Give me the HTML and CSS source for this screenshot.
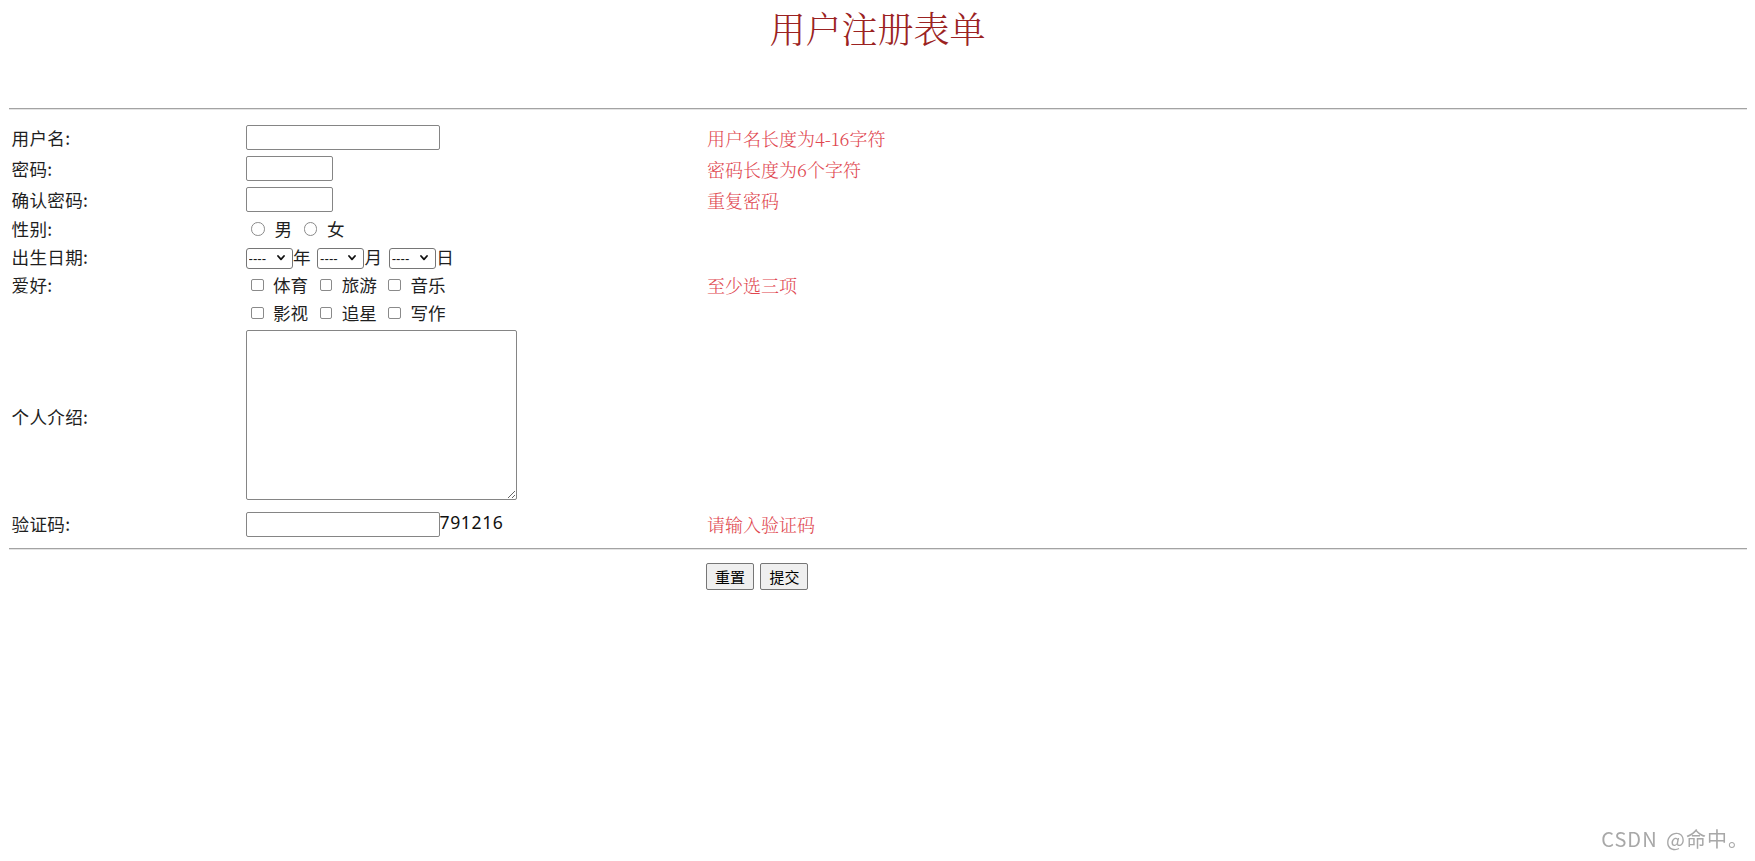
FILE: index.html
```html
<!DOCTYPE html>
<html lang="zh-CN">
<head>
<meta charset="utf-8">
<title>用户注册表单</title>
<link rel="stylesheet" href="styles.css">
</head>
<body>
<h1 class="title">用户注册表单</h1>
<hr class="rule rule-top">
<form class="reg-form">
  <div class="rows">
    <div class="row row-input">
      <span class="label">用户名:</span>
      <span class="field"><input class="text text-long" type="text"></span>
      <span class="hint">用户名长度为4-16字符</span>
    </div>
    <div class="row row-input">
      <span class="label">密码:</span>
      <span class="field"><input class="text text-short" type="password"></span>
      <span class="hint">密码长度为6个字符</span>
    </div>
    <div class="row row-input">
      <span class="label">确认密码:</span>
      <span class="field"><input class="text text-short" type="password"></span>
      <span class="hint">重复密码</span>
    </div>
    <div class="row row-line">
      <span class="label">性别:</span>
      <span class="field choices">
        <label class="opt"><input class="radio" type="radio" name="sex"><span>男</span></label>
        <label class="opt"><input class="radio" type="radio" name="sex"><span>女</span></label>
      </span>
      <span class="hint"></span>
    </div>
    <div class="row row-line">
      <span class="label">出生日期:</span>
      <span class="field date">
        <span class="date-part">
          <span class="sel-wrap"><select class="sel"><option>----</option></select><svg class="chev" viewBox="0 0 8 6" width="8" height="6"><polyline points="1,1 4,4.4 7,1" fill="none" stroke="#111" stroke-width="1.8" stroke-linecap="round" stroke-linejoin="round"/></svg></span><span class="unit">年</span>
        </span>
        <span class="date-part">
          <span class="sel-wrap"><select class="sel"><option>----</option></select><svg class="chev" viewBox="0 0 8 6" width="8" height="6"><polyline points="1,1 4,4.4 7,1" fill="none" stroke="#111" stroke-width="1.8" stroke-linecap="round" stroke-linejoin="round"/></svg></span><span class="unit">月</span>
        </span>
        <span class="date-part">
          <span class="sel-wrap"><select class="sel"><option>----</option></select><svg class="chev" viewBox="0 0 8 6" width="8" height="6"><polyline points="1,1 4,4.4 7,1" fill="none" stroke="#111" stroke-width="1.8" stroke-linecap="round" stroke-linejoin="round"/></svg></span><span class="unit">日</span>
        </span>
      </span>
      <span class="hint"></span>
    </div>
    <div class="row row-line">
      <span class="label">爱好:</span>
      <span class="field choices">
        <label class="opt"><input class="check" type="checkbox"><span>体育</span></label>
        <label class="opt"><input class="check" type="checkbox"><span>旅游</span></label>
        <label class="opt"><input class="check" type="checkbox"><span>音乐</span></label>
      </span>
      <span class="hint">至少选三项</span>
    </div>
    <div class="row row-line">
      <span class="label"></span>
      <span class="field choices">
        <label class="opt"><input class="check" type="checkbox"><span>影视</span></label>
        <label class="opt"><input class="check" type="checkbox"><span>追星</span></label>
        <label class="opt"><input class="check" type="checkbox"><span>写作</span></label>
      </span>
      <span class="hint"></span>
    </div>
    <div class="row row-area">
      <span class="label label-area">个人介绍:</span>
      <span class="field"><textarea class="area"></textarea></span>
      <span class="hint"></span>
    </div>
    <div class="row row-code">
      <span class="label">验证码:</span>
      <span class="field"><input class="text text-long" type="text"><span class="code">791216</span></span>
      <span class="hint">请输入验证码</span>
    </div>
  </div>
  <hr class="rule">
  <div class="row row-actions">
    <span class="label"></span>
    <span class="field"></span>
    <span class="actions">
      <button class="btn" type="reset">重置</button>
      <button class="btn" type="submit">提交</button>
    </span>
  </div>
</form>
<div class="watermark">CSDN @命中。</div>
</body>
</html>
```

FILE: styles.css
```css
html, body {
  margin: 0;
  padding: 0;
  background: #fff;
}

body {
  font-family: "Noto Sans CJK SC", "Noto Sans", sans-serif;
  font-size: 17.6px;
  color: #1f1f1f;
}

.title {
  margin: 10px 0 0;
  font-family: "Noto Serif CJK SC", "Liberation Serif", "Noto Sans CJK SC", serif;
  font-size: 36px;
  line-height: 36px;
  font-weight: 300;
  text-align: center;
  color: #9b2222;
}

.rule {
  height: 0;
  border: 0;
  border-top: 1px solid #a3a3a3;
  border-bottom: 1px solid #e4e4e4;
  margin: 0 8px 0 9px;
}

.rule-top {
  margin-top: 62px;
}

.reg-form {
  margin: 0;
}

.rows {
  margin-top: 12px;
}

.row {
  display: grid;
  grid-template-columns: 237.5px 460.5px 1fr;
  align-items: center;
  margin: 0 8px;
}

.row-input { height: 31px; }
.row-line { height: 28px; }
.row-area { height: 173px; }
.row-code { height: 48px; }

.label {
  padding-left: 3.5px;
  line-height: 1;
  white-space: nowrap;
  letter-spacing: 0.3px;
}

.label-area {
  padding-top: 6px;
}

.field {
  display: flex;
  align-items: center;
}

.text {
  box-sizing: border-box;
  height: 25px;
  margin: 0;
  padding: 1px 2px;
  border: 1px solid #858585;
  border-radius: 2px;
  background: #fff;
  font: 14px "Liberation Sans", sans-serif;
}

.text-long { width: 194px; }
.text-short { width: 87px; }

.code {
  letter-spacing: 0.6px;
  font-family: "Noto Sans", sans-serif;
  color: #111;
  line-height: 1;
  margin-top: -3px;
}

.choices {
  gap: 6px;
}

.opt {
  display: inline-flex;
  align-items: center;
  line-height: 1;
}

.radio {
  appearance: none;
  -webkit-appearance: none;
  box-sizing: border-box;
  width: 13.5px;
  height: 13.5px;
  margin: 0 10px 0 5.5px;
  border: 1px solid #8a8a8a;
  border-radius: 50%;
  background: #fff;
}

.check {
  appearance: none;
  -webkit-appearance: none;
  box-sizing: border-box;
  width: 12.5px;
  height: 12.5px;
  margin: 0 9.5px 0 5.5px;
  border: 1px solid #8a8a8a;
  border-radius: 2px;
  background: #fff;
}

.date-part {
  display: inline-flex;
  align-items: center;
  margin-right: 6.5px;
  line-height: 1;
}

.sel-wrap {
  position: relative;
  display: inline-block;
  width: 47px;
  height: 21px;
}

.sel {
  appearance: none;
  -webkit-appearance: none;
  box-sizing: border-box;
  width: 100%;
  height: 100%;
  margin: 0;
  padding: 0 0 0 2px;
  border: 1px solid #767676;
  border-radius: 3px;
  background: #fff;
  color: #111;
  font: 13.2px "Liberation Sans", sans-serif;
}

.chev {
  position: absolute;
  right: 8px;
  top: 8px;
  pointer-events: none;
}

.unit {
  margin-left: 0.5px;
}

.area {
  box-sizing: border-box;
  width: 271px;
  height: 170px;
  margin: 2px 0 0;
  border: 1px solid #858585;
  border-radius: 2px;
  padding: 2px;
  background: #fff;
}

.hint {
  font-family: "Noto Serif CJK SC", "Liberation Serif", "Noto Sans CJK SC", serif;
  font-size: 18px;
  color: #e0474f;
  font-weight: 300;
  line-height: 1;
  padding-left: 1px;
  white-space: nowrap;
}

.row-actions {
  margin-top: 13px;
}

.actions {
  display: flex;
  gap: 6.4px;
}

.btn {
  box-sizing: border-box;
  height: 27px;
  padding: 0 8px;
  margin: 0;
  border: 1px solid #767676;
  border-radius: 2px;
  background: #efefef;
  color: #000;
  font: 15px "Noto Sans CJK SC", sans-serif;
  line-height: 1;
}

.watermark {
  position: fixed;
  right: 6px;
  bottom: 12px;
  font-size: 20px;
  line-height: 20px;
  letter-spacing: 1px;
  word-spacing: 3px;
  color: #a8a8a8;
  white-space: nowrap;
}
```
